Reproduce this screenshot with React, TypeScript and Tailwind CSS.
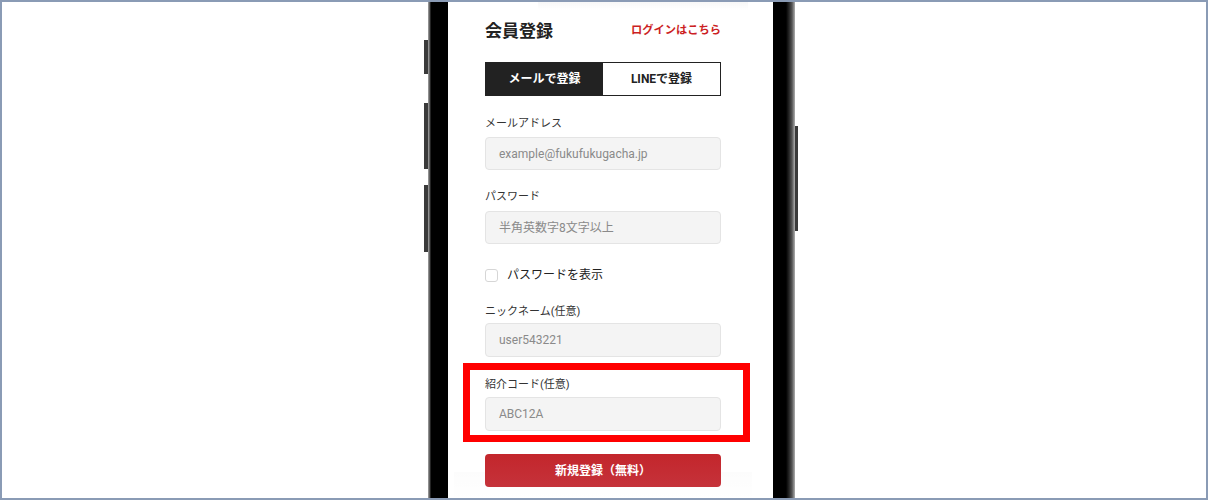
const fieldLabel = "block h-4 text-[11px] leading-4 text-[#333]";
const fieldInput =
  "flex w-full items-center rounded-[4px] border border-[#e4e4e4] bg-[#f4f4f4] pl-[13px] text-[12px] text-[#8a8a8a]";

export default function App() {
  return (
    <div className="flex h-[500px] w-[1208px] overflow-hidden border-2 border-[#8a9bb5] bg-white font-['Roboto','Noto_Sans_CJK_JP',sans-serif]">
      {/* left side buttons */}
      <div className="ml-[422px] flex w-[4px] flex-col">
        <div className="mt-[38px] h-[34px] w-[4px] bg-[#3a3a3a]" />
        <div className="mt-[29px] h-[66px] w-[4px] bg-[#3a3a3a]" />
        <div className="mt-[16px] h-[67px] w-[4px] bg-[#3a3a3a]" />
      </div>

      {/* phone body */}
      <div className="flex h-full w-[367px] bg-[linear-gradient(to_right,#a8a8a8_0px,#4a4a4a_2px,#000_3px,#000_358px,#262626_361px,#555_364px,#b0b0b0_367px)]">
        <div className="relative ml-[20px] h-full w-[325px] bg-white pl-[37px] pr-[52px] pt-[17px]">
          <div className="pointer-events-none absolute left-[90px] top-0 h-[8px] w-[210px] bg-[linear-gradient(to_bottom,rgba(0,0,0,0.03),rgba(0,0,0,0))]" />

          <div className="flex h-6 items-center justify-between">
            <h1 className="text-[17px] font-bold leading-6 text-[#222]">会員登録</h1>
            <span className="text-[11.25px] font-bold leading-6 text-[#cc1f24]">ログインはこちら</span>
          </div>

          <div className="mt-[19px] grid h-[34px] grid-cols-2 border border-[#222] text-[12px] font-bold">
            <div className="flex items-center justify-center bg-[#222] text-white">メールで登録</div>
            <div className="flex items-center justify-center bg-white text-[#222]">LINEで登録</div>
          </div>

          <label className={`${fieldLabel} mt-[20px]`}>メールアドレス</label>
          <div className={`${fieldInput} mt-[5px] h-[33px]`}>example@fukufukugacha.jp</div>

          <label className={`${fieldLabel} mt-[19px]`}>パスワード</label>
          <div className={`${fieldInput} mt-[6px] h-[33px]`}>半角英数字8文字以上</div>

          <div className="mt-[23px] flex h-4 items-center">
            <span className="h-[13px] w-[13px] rounded-[3px] border border-[#d6d6d6] bg-white" />
            <span className="ml-[9px] text-[12px] leading-4 text-[#222]">パスワードを表示</span>
          </div>

          <label className={`${fieldLabel} mt-[21px]`}>ニックネーム(任意)</label>
          <div className={`${fieldInput} mt-[3px] h-[34px]`}>user543221</div>

          <label className={`${fieldLabel} mt-[20px]`}>紹介コード(任意)</label>
          <div className={`${fieldInput} mt-[4px] h-[34px]`}>ABC12A</div>

          <div className="pointer-events-none absolute left-[6px] top-[470px] h-[30px] w-[298px] bg-[linear-gradient(to_bottom,rgba(0,0,0,0.012),rgba(0,0,0,0))]" />
          <button className="relative mt-[23px] flex h-[33px] w-full items-center justify-center rounded-[4px] bg-[linear-gradient(to_bottom,#c3262c,#c5323a)] text-[12px] font-bold text-white">
            新規登録（無料）
          </button>

          {/* annotation box */}
          <div className="pointer-events-none absolute left-[15px] top-[361px] h-[79px] w-[287px] border-[7px] border-[#ff0000]" />
        </div>
      </div>

      {/* right side button */}
      <div className="flex w-[4px] flex-col">
        <div className="mt-[124px] h-[105px] w-[3px] bg-[#3a3a3a]" />
      </div>
    </div>
  );
}
